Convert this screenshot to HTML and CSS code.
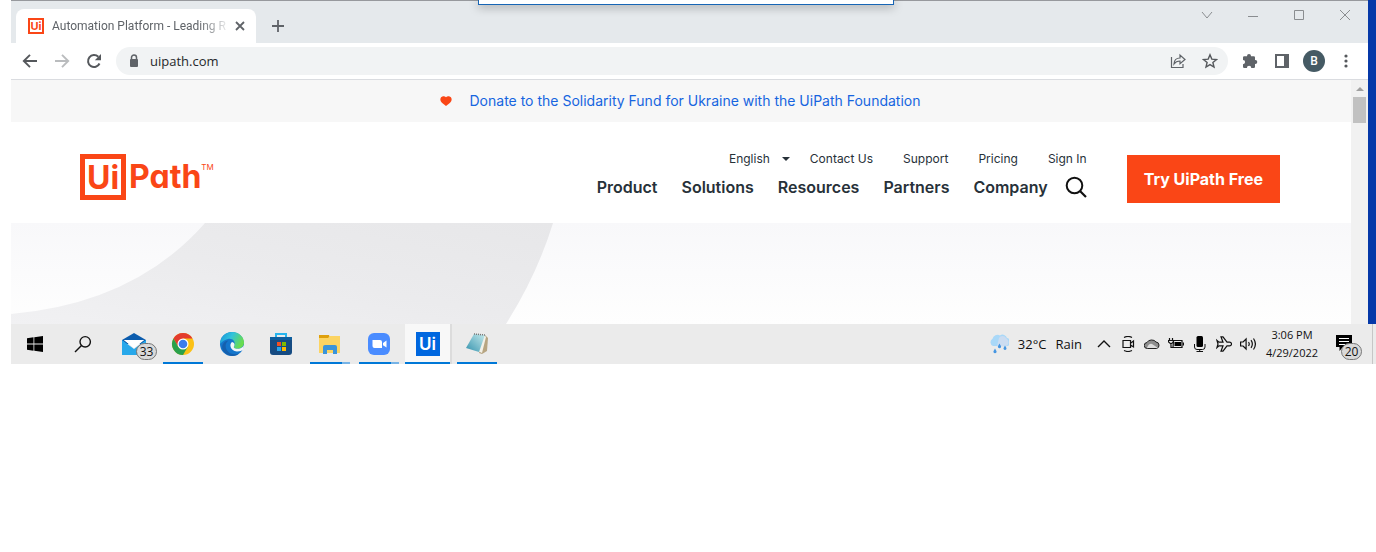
FILE: index.html
```html
<!DOCTYPE html>
<html lang="en">
<head>
<meta charset="utf-8">
<title>Automation Platform - Leading R</title>
<link rel="stylesheet" href="styles.css">
</head>
<body>
<div class="desktop">
  <div class="browser">
    <div class="tabstrip">
      <div class="tab">
        <span class="favicon">Ui</span>
        <span class="tab-title">Automation Platform - Leading R</span>
        <button class="tab-close" aria-label="Close tab"><svg width="10" height="10" viewBox="0 0 10 10"><path d="M1 1l8 8M9 1l-8 8" stroke="#5f6368" stroke-width="1.800"/></svg></button>
      </div>
      <button class="new-tab" aria-label="New tab"><svg width="12" height="12" viewBox="0 0 12 12"><path d="M6 0v12M0 6h12" stroke="#5f6368" stroke-width="1.800"/></svg></button>
      <div class="win-controls">
        <button aria-label="Search tabs"><svg width="12" height="12" viewBox="0 0 12 12"><path d="M1 3l5 6 5-6" fill="none" stroke="#8a8d90"/></svg></button>
        <button aria-label="Minimize"><svg width="12" height="12" viewBox="0 0 12 12"><path d="M1 7.500h10" stroke="#8a8d90"/></svg></button>
        <button aria-label="Maximize"><svg width="12" height="12" viewBox="0 0 12 12"><path d="M1.500 1.500h9v9h-9z" fill="none" stroke="#8a8d90"/></svg></button>
        <button aria-label="Close"><svg width="12" height="12" viewBox="0 0 12 12"><path d="M1 1l10 10M11 1L1 11" stroke="#8a8d90"/></svg></button>
      </div>
    </div>
    <div class="toolbar">
      <div class="tools">
        <button aria-label="Back"><svg width="16" height="16" viewBox="0 0 16 16"><path d="M15 8H2M8 1.800L1.800 8 8 14.200" fill="none" stroke="#55585c" stroke-width="1.900"/></svg></button>
        <button aria-label="Forward"><svg width="16" height="16" viewBox="0 0 16 16"><path d="M1 8h13M8 1.800L14.200 8 8 14.200" fill="none" stroke="#babcbe" stroke-width="1.900"/></svg></button>
        <button aria-label="Reload"><svg width="16" height="16" viewBox="0 0 16 16"><path d="M13.500 10.500A6 6 0 1 1 12.300 3.800" fill="none" stroke="#55585c" stroke-width="2"/><path d="M15 1v6.200H8.800z" fill="#55585c"/></svg></button>
      </div>
      <div class="omnibox">
        <svg width="10" height="14" viewBox="0 0 10 14"><path d="M2.500 6V3.500a2.500 2.500 0 0 1 5 0V6" fill="none" stroke="#5f6368" stroke-width="1.500"/><rect x="1" y="5" width="8" height="8" rx="1" fill="#5f6368"/></svg>
        <input class="url" aria-label="Address" value="uipath.com">
        <button aria-label="Share"><svg width="16" height="16" viewBox="0 0 16 16"><path d="M1.500 4v10.500h11.500v-3.500" fill="none" stroke="#5f6368" stroke-width="1.200"/><path d="M4 11c.2-4.500 2.500-6 6-6V2l5 4.500-5 4.200V8C7.500 8 5.600 8.600 4 11z" fill="none" stroke="#5f6368" stroke-width="1.200"/></svg></button>
        <button aria-label="Bookmark"><svg width="16" height="16" viewBox="0 0 16 16"><path d="M8 1.800l1.800 4.300 4.700.4-3.600 3 1.100 4.600L8 11.600l-4 2.500 1.100-4.600-3.600-3 4.700-.4z" fill="none" stroke="#55585c" stroke-width="1.400"/></svg></button>
      </div>
      <div class="tools">
        <button aria-label="Extensions"><svg width="16" height="16" viewBox="0 0 16 16"><path d="M1 4.500q0-1.200 1.200-1.200H5V3a2 2 0 0 1 4 0v.3h2.800q1.200 0 1.200 1.200V7h.3a2 2 0 0 1 0 4H13v2.800q0 1.200-1.200 1.200H9.300a2.200 2.200 0 0 0-4.400 0H2.200Q1 15 1 13.800v-2.600a2.100 2.100 0 0 0 0-4.200z" fill="#5f6368"/></svg></button>
        <button aria-label="Side panel"><svg width="14" height="14" viewBox="0 0 14 14"><path d="M0 0h14v14H0zM2 2v10h7V2z" fill="#5f6368" fill-rule="evenodd"/></svg></button>
        <button aria-label="Profile"><span class="avatar">B</span></button>
        <button aria-label="Menu"><svg width="4" height="14" viewBox="0 0 4 14"><g fill="#55585c"><circle cx="2" cy="2" r="1.600"/><circle cx="2" cy="7" r="1.600"/><circle cx="2" cy="12" r="1.600"/></g></svg></button>
      </div>
    </div>
    <div class="viewport">
      <main class="page">
        <div class="banner">
          <svg width="12" height="10" viewBox="0 0 12 10"><path d="M6 10L2.500 7.200C-.2 5 .2 2.800.8 1.800 1.900 0 4.700-.2 6 1.200 7.300-.2 10.100 0 11.200 1.800c.6 1 1 3.200-1.700 5.400z" fill="#fa4616"/></svg>
          <a href="#">Donate to the Solidarity Fund for Ukraine with the UiPath Foundation</a>
        </div>
        <header class="header">
          <a class="logo" href="#"><span class="logo-box">Ui</span><span class="logo-word">Path</span><span class="logo-tm">TM</span></a>
          <nav class="nav">
            <div class="nav-top">
              <a class="lang" href="#">English <svg width="8" height="4" viewBox="0 0 8 4"><path d="M0 0h8L4 4z" fill="#273139"/></svg></a>
              <a href="#">Contact Us</a><a href="#">Support</a><a href="#">Pricing</a><a href="#">Sign In</a>
            </div>
            <div class="nav-main">
              <a href="#">Product</a><a href="#">Solutions</a><a href="#">Resources</a><a href="#">Partners</a><a href="#">Company</a>
              <button class="search" aria-label="Search"><svg width="22" height="22" viewBox="0 0 22 22"><circle cx="9.500" cy="9.500" r="7.800" fill="none" stroke="#111" stroke-width="2"/><path d="M15 15l6 6" stroke="#111" stroke-width="2.200"/></svg></button>
            </div>
          </nav>
          <a class="cta" href="#">Try UiPath Free</a>
        </header>
        <section class="hero">
          <svg width="543" height="101" viewBox="0 0 543 101">
            <defs>
              <linearGradient id="band" x1="0" y1="1" x2="1" y2="0"><stop offset="0" stop-color="#f1f1f3"/><stop offset=".5" stop-color="#ebebed"/><stop offset="1" stop-color="#e7e7e9"/></linearGradient>
            </defs>
            <path d="M194 0H542Q526 52 495 101H0V91Q124 80 194 0z" fill="url(#band)"/>
          </svg>
        </section>
      </main>
      <div class="scrollbar">
        <svg width="8" height="4" viewBox="0 0 8 4"><path d="M4 0l4 4H0z" fill="#a0a0a0"/></svg>
        <div class="thumb"></div>
      </div>
    </div>
    <div class="popup"></div>
  </div>

  <footer class="taskbar">
    <button class="sys" aria-label="Start"><svg width="16" height="16" viewBox="0 0 16 16"><path d="M0 2.200L6.500 1.300V7.600H0zM7.300 1.200L16 0v7.600H7.300zM0 8.400h6.500v6.300L0 13.800zM7.300 8.400H16V16l-8.700-1.200z"/></svg></button>
    <button class="sys" aria-label="Search"><svg width="18" height="18" viewBox="0 0 18 18"><circle cx="11.200" cy="6.800" r="5.200" fill="none" stroke="#111" stroke-width="1.400"/><path d="M7.500 10.500L1 17" stroke="#111" stroke-width="1.500"/></svg></button>
    <div class="apps">
      <button class="app" aria-label="Mail"><svg width="24" height="24" viewBox="0 0 24 24"><path d="M0 8l12-7 12 7v4H0z" fill="#0b5cad"/><path d="M2 8h20L12 16z" fill="#fff"/><path d="M0 8l12 9L24 8v15H0z" fill="#28a8ea"/><path d="M2 8h20L12 16z" fill="#fff"/></svg><span class="badge">33</span></button>
      <button class="app running" aria-label="Chrome"><svg width="24" height="24" viewBox="0 0 24 24"><circle cx="12" cy="12" r="11" fill="#fbc116"/><path d="M2.470 6.500A11 11 0 0 1 21.530 6.500H12L7.200 14.700z" fill="#e33b2e"/><path d="M2.470 6.500A11 11 0 0 0 12 23l4.800-8.200H7.200z" fill="#2aa14c"/><circle cx="12" cy="12" r="5.500" fill="#fff"/><circle cx="12" cy="12" r="4.300" fill="#3b7ded"/></svg></button>
      <button class="app" aria-label="Edge"><svg width="24" height="24" viewBox="0 0 24 24"><defs><linearGradient id="edge" x1="0" y1="0" x2="1" y2=".4"><stop offset="0" stop-color="#1490d8"/><stop offset=".5" stop-color="#32c3dc"/><stop offset="1" stop-color="#68dc50"/></linearGradient></defs><circle cx="12" cy="12" r="12" fill="#1476cc"/><path d="M0 12C0 5 5 0 12 0s12 5 12 10.500c0 4-3 6.200-6.500 6.200-3 0-4.300-1.200-3.200-3C16 9 12 6 8 7c-5 1-8 5-8 5z" fill="url(#edge)"/><path d="M8.500 8.500C2 13 7 25 19 21.500 16 25 8 25 4 20S3 9 8.500 8.500z" fill="#1560ae"/><path d="M12 10c-3 2-2 9 5 9.500 3 0 5-.8 6.500-2.200L24 13c-1.500 3-4 4-6.500 3.700-3 0-4.500-1.200-3.200-3 .8-1.700-.5-3.500-2.300-3.700z" fill="#f3f6f8"/></svg></button>
      <button class="app" aria-label="Store"><svg width="24" height="24" viewBox="0 0 24 24"><path d="M7 6V2h10v4" fill="none" stroke="#27b5ee" stroke-width="2"/><path d="M1 5h22v15q0 3-3 3H4q-3 0-3-3z" fill="#164b82"/><path d="M1 5h22v3H1z" fill="#0e5e9e"/><path d="M8 10h4v4H8z" fill="#f25022"/><path d="M13 10h4v4h-4z" fill="#7fba00"/><path d="M8 15h4v4H8z" fill="#29a5ec"/><path d="M13 15h4v4h-4z" fill="#ffb900"/></svg></button>
      <button class="app running stacked" aria-label="File Explorer"><svg width="24" height="24" viewBox="0 0 24 24"><path d="M1 3h10l1 3H1z" fill="#dfa00c"/><path d="M1 6h9l2-2h10v17H1z" fill="#fcd462"/><path d="M5 22v-7q0-2 2-2h10q2 0 2 2v7h-4v-4H9v4z" fill="#3b94d9"/></svg></button>
      <button class="app running stacked" aria-label="Zoom"><svg width="24" height="24" viewBox="0 0 24 24"><rect x="1" y="1" width="22" height="22" rx="6" fill="#4a8cff"/><path d="M5.500 8H13q2 0 2 2v6H7.500q-2 0-2-2z" fill="#fff"/><path d="M16 11l3.500-2.500v7L16 13.200z" fill="#fff"/></svg></button>
      <button class="app active" aria-label="UiPath"><span class="ui-icon">Ui</span></button>
      <button class="app running" aria-label="Notepad"><svg width="24" height="24" viewBox="0 0 24 24"><defs><linearGradient id="pad" x1="0" y1="1" x2="1" y2="0"><stop offset="0" stop-color="#3593ae"/><stop offset="1" stop-color="#c5eaec"/></linearGradient></defs><path d="M20 3l3 3-1 13-5 3-3-1z" fill="#b7a582"/><path d="M19 3l2 2-4 16-4-2z" fill="#f3f1e8"/><path d="M9 2l11 1-6 17-13-4z" fill="url(#pad)"/><path d="M9 2l11 1" stroke="#777" stroke-width="1.500" stroke-dasharray="1 1"/></svg></button>
    </div>
    <div class="tray">
      <a class="weather" href="#">
        <svg width="20" height="20" viewBox="0 0 20 20"><path d="M4 12a4 4 0 0 1-.5-7.200A5 5 0 0 1 11 1.500 4.500 4.500 0 0 1 18 4a4 4 0 0 1-1.500 8.300z" fill="#a9d8f8"/><path d="M10 4a4 4 0 0 1 7 0c3 2 4 7-1 8.300H8z" fill="#cbdcf1"/><path d="M10.500 9.500l1.400 2.500a1.600 1.600 0 1 1-2.800 0zM16 11.500l1.300 2.300a1.500 1.500 0 1 1-2.600 0zM6 14.500l1.400 2.500a1.600 1.600 0 1 1-2.800 0z" fill="#4596e2"/></svg>
        <span>32°C</span><span>Rain</span>
      </a>
      <div class="tray-icons">
        <svg viewBox="0 0 16 16"><path d="M2 11l6-6 6 6" fill="none" stroke="#111" stroke-width="1.400"/></svg>
        <svg viewBox="0 0 16 16"><path d="M4 1.500q4-2 8 0M4 14.500q4 2 8 0M3 4.500h7.500v7H3zM10.500 7.200L13.500 5v6l-3-2" fill="none" stroke="#111" stroke-width="1.200"/></svg>
        <svg viewBox="0 0 16 16"><path d="M3.500 12.500a3 3 0 0 1-.5-6 5 4 0 0 1 9-.5 3.300 3.300 0 0 1 .5 6.500z" fill="#8e8e8e" stroke="#222"/><path d="M3 12q2-5 5-4l6 4z" fill="#ddd"/></svg>
        <svg viewBox="0 0 16 16"><path d="M5.500 4.500h8.500v7H5zM15.500 6.500v3" fill="none" stroke="#111" stroke-width="1.200"/><path d="M6.500 6h6.500v4H6.500z"/><path d="M1.500 2v2.500M4.500 2v2.500M.5 4.500h5v1.500L3 8 .5 6zM3 8v3.500h2" fill="none" stroke="#111" stroke-width="1.200"/></svg>
        <svg viewBox="0 0 16 16"><rect x="4.500" y="0" width="6.500" height="11" rx="1.500"/><path d="M2.500 8v3q0 2.500 2.500 2.500h5.500q2.500 0 2.500-2.500V8M7.700 13v3M4.500 15.500h6.500" fill="none" stroke="#111"/></svg>
        <svg viewBox="0 0 16 16"><path d="M1 4.500l2 1.700h4L5 .8h2L11 6.200h2.500q2 0 2 1.800t-2 1.800H11L7 15.200H5L7 9.800H3L1 11.500 2 8z" fill="none" stroke="#111" stroke-width="1.200"/></svg>
        <svg viewBox="0 0 16 16"><path d="M.6 6v4h2.500l3 3V3l-3 3zM8.500 6q1.500 2 0 4M11 4.200q2.700 3.800 0 7.600M13.500 2.500q3.800 5.500 0 11" fill="none" stroke="#111" stroke-width="1.200"/></svg>
      </div>
      <div class="clock"><span>3:06 PM</span><span>4/29/2022</span></div>
      <button class="notify" aria-label="Notifications"><svg width="16" height="16" viewBox="0 0 16 16"><path d="M0 0h16v12H7l-3.500 4v-4H0z"/><path d="M3 3.500h10M3 6.500h10M3 9.500h6" stroke="#fff"/></svg><span class="badge">20</span></button>
    </div>
  </footer>
</div>
</body>
</html>
```
FILE: styles.css
```css
* { box-sizing: border-box; }
body { margin: 0; background: #fff; font-family: "Open Sans", "Noto Sans", sans-serif; }
button { border: 0; padding: 0; background: none; font: inherit; color: inherit; }
a { color: inherit; text-decoration: none; }
svg { display: block; flex: none; }

.desktop { margin-left: 11px; background: #0538a8; }
.browser { position: relative; margin-right: 8px; background: #fff; }

.tabstrip { display: flex; height: 43px; align-items: flex-end; padding-left: 5px; background: #e5e9ec; border-top: 1px solid #97999d; }
.tab { display: flex; align-items: center; width: 240px; height: 34px; padding: 0 11px 0 12px; background: #fff; border-radius: 8px 8px 0 0; }
.favicon { width: 16px; height: 16px; border: 2px solid #fa4616; color: #fa4616; font: 700 11px/12px Inter, sans-serif; text-align: center; }
.tab-title { flex: 1; margin: 0 4px 0 8px; white-space: nowrap; font: 12px/16px Roboto, sans-serif; color: #5f6368; mask-image: linear-gradient(to right, #000 82%, transparent); }
.tab-close { display: flex; }
.new-tab { display: flex; width: 44px; height: 34px; align-items: center; justify-content: center; }
.win-controls { display: flex; margin-left: auto; align-self: flex-start; }
.win-controls button { display: flex; width: 46px; height: 28px; align-items: center; justify-content: center; }

.toolbar { display: flex; align-items: center; gap: 6px; height: 37px; padding: 0 6px 0 3px; border-bottom: 1px solid #dadce0; }
.tools { display: flex; }
.tools button, .omnibox button { display: flex; width: 32px; height: 28px; align-items: center; justify-content: center; }
.omnibox { display: flex; flex: 1; align-items: center; height: 28px; padding: 0 2px 0 13px; border-radius: 14px; background: #f1f3f4; }
.url { flex: 1; min-width: 0; margin-left: 11px; padding: 0; border: 0; background: none; font: 13px "Open Sans", sans-serif; color: #26282b; }
.avatar { width: 22px; height: 22px; border-radius: 50%; background: #455a64; color: #fff; font: 500 12px/22px Roboto, sans-serif; text-align: center; }

.viewport { display: flex; }
.page { flex: 1; min-width: 0; font-family: Inter, sans-serif; }
.banner { display: flex; align-items: center; justify-content: center; gap: 18px; height: 42px; padding: 0 2px 1px 0; background: #f7f7f7; font-size: 14px; color: #1665e0; }
.header { display: flex; align-items: center; height: 101px; padding: 0 71px 0 69px; color: #273139; }
.logo { display: flex; align-items: center; margin-top: 8px; color: #fa4616; font: 700 32px/38px Inter, sans-serif; font-feature-settings: "cv11"; }
.logo-box { width: 46px; height: 46px; border: 5px solid; text-align: center; }
.logo-word { margin-left: 3px; }
.logo-tm { align-self: flex-start; margin-top: 8px; font-size: 8px; line-height: 10px; font-weight: 400; }
.nav { display: flex; flex-direction: column; align-items: flex-end; gap: 9px; margin-left: auto; margin-top: 4px; }
.nav-top { display: flex; gap: 30px; font-size: 12px; line-height: 16px; }
.lang { display: flex; align-items: center; gap: 12px; margin-right: -10px; }
.nav-main { display: flex; align-items: center; gap: 24px; font-size: 16px; line-height: 22px; font-weight: 600; }
.search { margin-left: -7px; }
.cta { margin-left: 40px; padding: 0 17px; background: #fa4616; color: #fff; font-size: 16px; line-height: 48px; font-weight: 700; margin-top: 13px; }
.hero { background: linear-gradient(#f8f8fa, #fefefe); }

.scrollbar { width: 17px; padding-top: 7px; background: #f1f1f1; }
.scrollbar svg { margin: 0 auto; }
.thumb { width: 13px; height: 26px; margin: 6px auto 0; background: #c1c1c1; }
.popup { position: absolute; top: 0; left: 467px; width: 416px; height: 5px; background: #fff; border: 1px solid #1765b5; border-top: 0; box-shadow: 0 2px 10px rgba(0, 0, 0, .35); }

.taskbar { display: flex; height: 40px; padding-right: 3px; background: #ebebeb; color: #111; }
.sys { display: flex; width: 48px; align-items: center; justify-content: center; }
.apps { display: flex; gap: 4px; margin-left: 4px; }
.app { position: relative; display: flex; width: 45px; align-items: center; justify-content: center; }
.running::after { content: ""; position: absolute; left: 3px; right: 2px; bottom: 0; height: 2px; background: #0078d7; }
.stacked::after { background: linear-gradient(to right, #0078d7 80%, #76b3e6 80%); }
.active { background: #f8f8f8; border-bottom: 2px solid #0078d7; box-shadow: 2px 0 #dcdcdc; padding-top: 2px; }
.ui-icon { width: 24px; height: 24px; background: #0067df; color: #fff; font: 600 17px/24px Inter, sans-serif; text-align: center; }
.badge { position: absolute; display: block; width: 21px; height: 17px; border: 1px solid #777; border-radius: 9px; background: #d9d9d9; color: #111; font-size: 12px; line-height: 15px; text-align: center; }
.app .badge { right: -1px; top: 19px; }
.tray { display: flex; align-items: center; margin-left: auto; border-right: 1px solid #c6c6c6; }
.weather { display: flex; align-items: center; gap: 9px; font-size: 13px; margin-right: 14px; }
.tray-icons { display: flex; gap: 8px; }
.tray-icons svg { width: 16px; height: 16px; }
.clock { display: flex; flex-direction: column; width: 72px; text-align: center; font-size: 11px; line-height: 18px; }
.notify { position: relative; width: 44px; height: 40px; padding: 0 0 2px 8px; }
.notify .badge { left: 13px; top: 19px; }
```
